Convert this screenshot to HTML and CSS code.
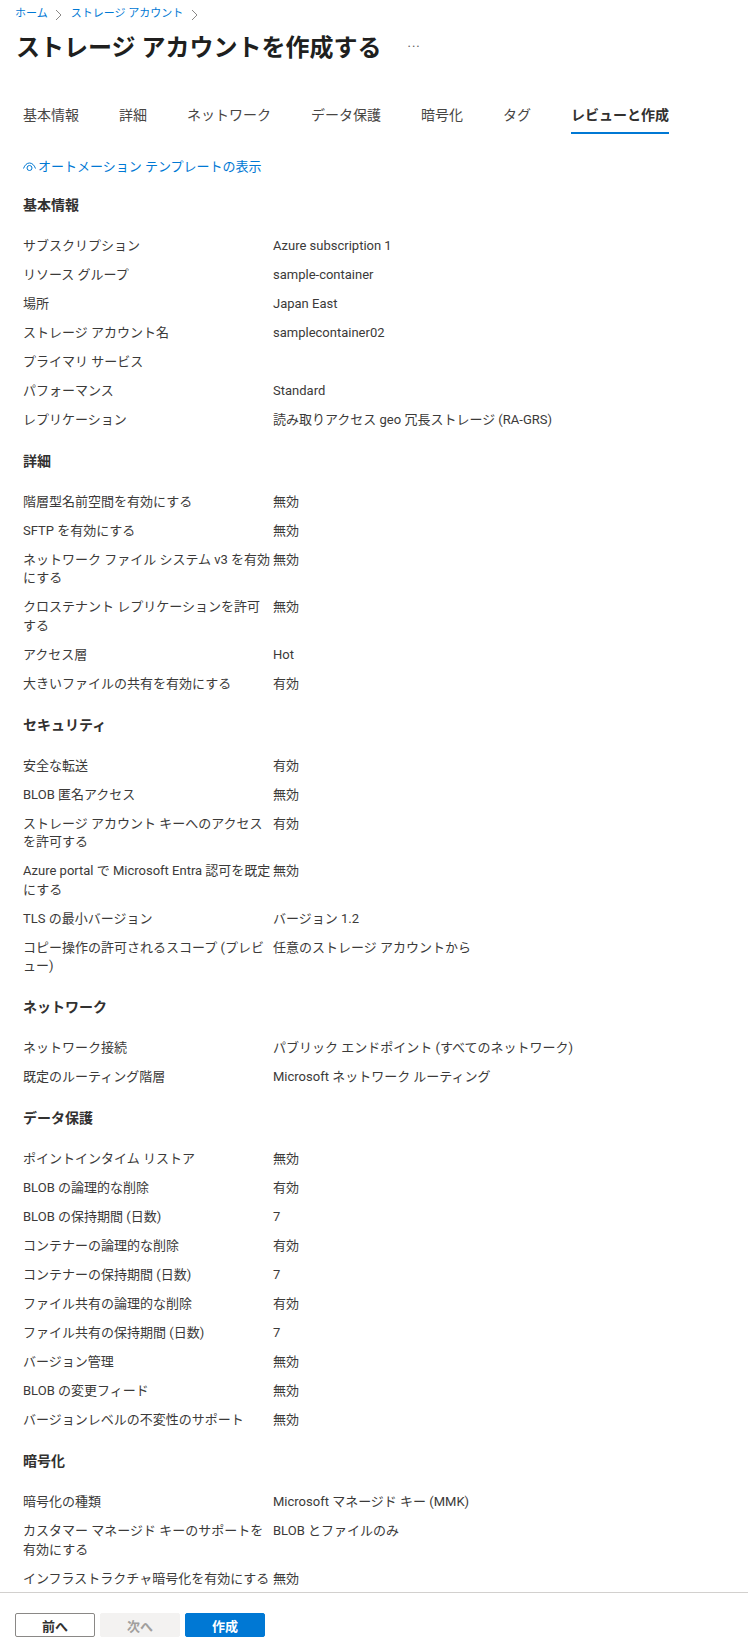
FILE: index.html
```html
<!DOCTYPE html>
<html lang="ja">
<head>
    <meta charset="UTF-8">
    <meta name="viewport" content="width=device-width, initial-scale=1.0">
    <title>ストレージ アカウントを作成する</title>
    <link rel="stylesheet" href="styles.css">
</head>
<body>
    <div class="page">
        <nav class="breadcrumb">
            <a href="#">ホーム</a>
            <svg class="chevron" viewBox="0 0 8 12"><path d="M1 1l5 5-5 5"/></svg>
            <a href="#">ストレージ アカウント</a>
            <svg class="chevron" viewBox="0 0 8 12"><path d="M1 1l5 5-5 5"/></svg>
        </nav>
        <div class="title-row">
            <h1>ストレージ アカウントを作成する</h1>
            <span class="more">...</span>
        </div>

        <div class="tabs">
            <span class="tab">基本情報</span>
            <span class="tab">詳細</span>
            <span class="tab">ネットワーク</span>
            <span class="tab">データ保護</span>
            <span class="tab">暗号化</span>
            <span class="tab">タグ</span>
            <span class="tab active">レビューと作成</span>
        </div>

        <div class="content">
            <a class="template-link" href="#">
                <svg viewBox="0 0 13 10"><path d="M.5 6.500C1.800 3 3.900 1 6.500 1s4.700 2 6 5.500"/><circle cx="6.500" cy="6" r="2.500"/></svg>
                オートメーション テンプレートの表示
            </a>

            <h2>基本情報</h2>
            <dl>
                <dt>サブスクリプション</dt><dd>Azure subscription 1</dd>
                <dt>リソース グループ</dt><dd>sample-container</dd>
                <dt>場所</dt><dd>Japan East</dd>
                <dt>ストレージ アカウント名</dt><dd>samplecontainer02</dd>
                <dt>プライマリ サービス</dt><dd></dd>
                <dt>パフォーマンス</dt><dd>Standard</dd>
                <dt>レプリケーション</dt><dd>読み取りアクセス geo 冗長ストレージ (RA-GRS)</dd>
            </dl>

            <h2>詳細</h2>
            <dl>
                <dt>階層型名前空間を有効にする</dt><dd>無効</dd>
                <dt>SFTP を有効にする</dt><dd>無効</dd>
                <dt>ネットワーク ファイル システム v3 を有効にする</dt><dd>無効</dd>
                <dt>クロステナント レプリケーションを許可する</dt><dd>無効</dd>
                <dt>アクセス層</dt><dd>Hot</dd>
                <dt>大きいファイルの共有を有効にする</dt><dd>有効</dd>
            </dl>

            <h2>セキュリティ</h2>
            <dl>
                <dt>安全な転送</dt><dd>有効</dd>
                <dt>BLOB 匿名アクセス</dt><dd>無効</dd>
                <dt>ストレージ アカウント キーへのアクセスを許可する</dt><dd>有効</dd>
                <dt>Azure portal で Microsoft Entra 認可を既定にする</dt><dd>無効</dd>
                <dt>TLS の最小バージョン</dt><dd>バージョン 1.2</dd>
                <dt>コピー操作の許可されるスコープ (プレビュー)</dt><dd>任意のストレージ アカウントから</dd>
            </dl>

            <h2>ネットワーク</h2>
            <dl>
                <dt>ネットワーク接続</dt><dd>パブリック エンドポイント (すべてのネットワーク)</dd>
                <dt>既定のルーティング階層</dt><dd>Microsoft ネットワーク ルーティング</dd>
            </dl>

            <h2>データ保護</h2>
            <dl>
                <dt>ポイントインタイム リストア</dt><dd>無効</dd>
                <dt>BLOB の論理的な削除</dt><dd>有効</dd>
                <dt>BLOB の保持期間 (日数)</dt><dd>7</dd>
                <dt>コンテナーの論理的な削除</dt><dd>有効</dd>
                <dt>コンテナーの保持期間 (日数)</dt><dd>7</dd>
                <dt>ファイル共有の論理的な削除</dt><dd>有効</dd>
                <dt>ファイル共有の保持期間 (日数)</dt><dd>7</dd>
                <dt>バージョン管理</dt><dd>無効</dd>
                <dt>BLOB の変更フィード</dt><dd>無効</dd>
                <dt>バージョンレベルの不変性のサポート</dt><dd>無効</dd>
            </dl>

            <h2>暗号化</h2>
            <dl>
                <dt>暗号化の種類</dt><dd>Microsoft マネージド キー (MMK)</dd>
                <dt>カスタマー マネージド キーのサポートを有効にする</dt><dd>BLOB とファイルのみ</dd>
                <dt>インフラストラクチャ暗号化を有効にする</dt><dd>無効</dd>
            </dl>
        </div>

        <div class="footer">
            <button class="btn">前へ</button>
            <button class="btn disabled">次へ</button>
            <button class="btn primary">作成</button>
        </div>
    </div>
</body>
</html>
```

FILE: styles.css
```css
:root {
    --link-color: #0078d4;
    --text-color: #3b3a39;
    --title-color: #323130;
}

* {
    margin: 0;
    padding: 0;
    box-sizing: border-box;
}

body {
    background: white;
    color: var(--text-color);
    font-family: Roboto, "Noto Sans CJK JP", sans-serif;
    font-size: 13px;
    line-height: 18.5px;
}

a {
    color: var(--link-color);
    text-decoration: none;
}

.page {
    height: 100vh;
    display: flex;
    flex-direction: column;
    overflow: hidden;
}

.breadcrumb {
    display: flex;
    align-items: center;
    gap: 7.500px;
    padding: 6px 0 0 15px;
    height: 23px;
    font-size: 11px;
}

.chevron {
    width: 8px;
    height: 12px;
    fill: none;
    stroke: #8a8886;
    stroke-width: 1;
}

.title-row {
    display: flex;
    align-items: center;
    gap: 26px;
    padding: 3px 0 0 16px;
    height: 46px;
}

h1 {
    font-size: 24px;
    font-weight: 600;
    line-height: 34px;
    color: #201f1e;
}

.more {
    color: #605e5c;
    font-size: 13px;
    line-height: 13px;
    letter-spacing: 1px;
    margin-bottom: 10px;
}

.tabs {
    display: flex;
    gap: 40px;
    padding: 31px 0 0 23px;
    height: 65px;
}

.tab {
    font-size: 14px;
    line-height: 30px;
    height: 34px;
    color: #484644;
}

.tab.active {
    font-weight: 700;
    color: var(--title-color);
    border-bottom: 2px solid var(--link-color);
}

.content {
    flex: 1;
    overflow: hidden;
    padding: 24px 23px 0;
}

.template-link {
    display: flex;
    align-items: center;
    gap: 2px;
    margin-bottom: 18px;
}

.template-link svg {
    width: 13px;
    height: 10px;
    fill: none;
    stroke: var(--link-color);
    stroke-width: 1;
}

h2 {
    font-size: 14px;
    font-weight: 700;
    line-height: 20px;
    color: var(--title-color);
    margin-bottom: 22px;
}

dl {
    display: grid;
    grid-template-columns: 250px 1fr;
    row-gap: 10.500px;
    margin-bottom: 21.500px;
}

dt {
    padding-right: 1px;
}

.footer {
    height: 60px;
    flex-shrink: 0;
    border-top: 1px solid #d2d0ce;
    display: flex;
    align-items: flex-start;
    gap: 5px;
    padding: 20px 0 0 15px;
}

.btn {
    width: 80px;
    height: 24px;
    border: 1px solid #8a8886;
    border-radius: 2px;
    background: white;
    color: var(--title-color);
    font-family: inherit;
    font-size: 13px;
    font-weight: 700;
}

.btn.disabled {
    background: #f3f2f1;
    border-color: #f3f2f1;
    color: #a19f9d;
}

.btn.primary {
    background: var(--link-color);
    border-color: var(--link-color);
    color: white;
}
```
